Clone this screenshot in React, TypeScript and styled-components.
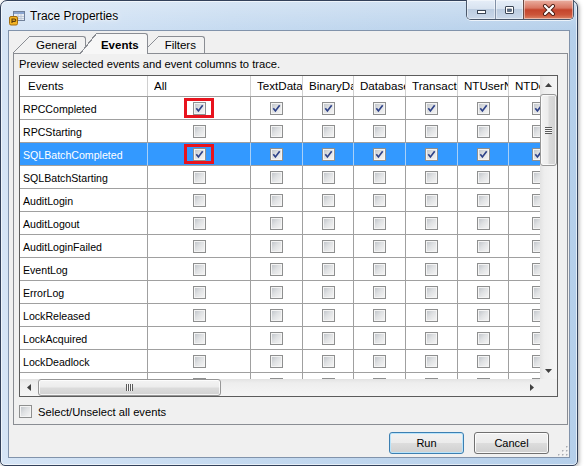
import React from 'react'
import styled, { createGlobalStyle, css } from 'styled-components'

const UI_FONT = '"Liberation Sans", Arial, sans-serif'

const GlobalStyle = createGlobalStyle`
  * { box-sizing: border-box; }
  html, body { margin: 0; padding: 0; background: #ffffff; }
  body { font-family: ${UI_FONT}; color: #000; }
`

type GridColumn = { title: string; width: number }

const EVENTS = [
  'RPCCompleted',
  'RPCStarting',
  'SQLBatchCompleted',
  'SQLBatchStarting',
  'AuditLogin',
  'AuditLogout',
  'AuditLoginFailed',
  'EventLog',
  'ErrorLog',
  'LockReleased',
  'LockAcquired',
  'LockDeadlock',
  'LockTimeout',
]

const COLUMNS: GridColumn[] = [
  { title: 'All', width: 103 },
  { title: 'TextData', width: 52 },
  { title: 'BinaryData', width: 51 },
  { title: 'DatabaseName', width: 52 },
  { title: 'TransactionID', width: 52 },
  { title: 'NTUserName', width: 51 },
  { title: 'NTDomainName', width: 60 },
]

const CHECKED_ROWS = [0, 2]
const SELECTED_ROW = 2
const NAME_WIDTH = 128

export default function App() {
  return (
    <>
      <GlobalStyle />
      <Window>
        <TitleBar>
          <AppIcon />
          <Title>Trace Properties</Title>
          <CaptionGroup>
            <CaptionButton $kind="min">
              <svg width="11" height="10" viewBox="0 0 11 10">
                <rect x="1.5" y="5.5" width="8" height="3" fill="#fff" stroke="#3b4656" />
              </svg>
            </CaptionButton>
            <CaptionButton $kind="max">
              <svg width="11" height="10" viewBox="0 0 11 10">
                <rect x="1.5" y="1.5" width="8" height="7" rx="0.5" fill="#fff" stroke="#3b4656" />
                <rect x="3.5" y="4" width="4" height="2.5" fill="#5b6f8c" stroke="#3b4656" strokeWidth="0.6" />
              </svg>
            </CaptionButton>
            <CaptionButton $kind="close">
              <svg width="14" height="12" viewBox="0 0 14 12">
                <path d="M3 2 L11 10 M11 2 L3 10" stroke="#4a1d14" strokeWidth="4" strokeLinecap="round" />
                <path d="M3 2 L11 10 M11 2 L3 10" stroke="#fff" strokeWidth="2.2" strokeLinecap="round" />
              </svg>
            </CaptionButton>
          </CaptionGroup>
        </TitleBar>

        <Client>
          <TabStrip>
            <Tab label="General" layer={2} />
            <Tab label="Events" layer={3} active />
            <Tab label="Filters" layer={1} />
          </TabStrip>

          <TabPanel>
            <Hint>Preview selected events and event columns to trace.</Hint>

            <GridFrame>
              <Viewport>
                <HeaderRow>
                  <HeaderCell $width={NAME_WIDTH} $first>
                    <HeaderText>Events</HeaderText>
                  </HeaderCell>
                  {COLUMNS.map((c) => (
                    <HeaderCell key={c.title} $width={c.width}>
                      <HeaderText>{c.title}</HeaderText>
                    </HeaderCell>
                  ))}
                </HeaderRow>
                {EVENTS.map((name, i) => {
                  const selected = i === SELECTED_ROW
                  const checked = CHECKED_ROWS.includes(i)
                  return (
                    <Row key={name} $selected={selected}>
                      <NameCell $selected={selected}>{name}</NameCell>
                      {COLUMNS.map((c, j) => (
                        <CheckCell key={c.title} $width={c.width} $selected={selected}>
                          <CheckSpot $marked={j === 0 && checked}>
                            <CheckBox checked={checked} />
                          </CheckSpot>
                        </CheckCell>
                      ))}
                    </Row>
                  )
                })}
              </Viewport>

              <VScroll>
                <ScrollArrow>
                  <svg width="7" height="4" viewBox="0 0 7 4">
                    <polygon points="0,4 7,4 3.5,0" fill="#404040" />
                  </svg>
                </ScrollArrow>
                <VThumb>
                  <VGrip />
                </VThumb>
                <Track />
                <ScrollArrow>
                  <svg width="7" height="4" viewBox="0 0 7 4">
                    <polygon points="0,0 7,0 3.5,4" fill="#404040" />
                  </svg>
                </ScrollArrow>
              </VScroll>

              <HScroll>
                <ScrollArrow>
                  <svg width="4" height="7" viewBox="0 0 4 7">
                    <polygon points="4,0 4,7 0,3.5" fill="#404040" />
                  </svg>
                </ScrollArrow>
                <HThumb>
                  <HGrip />
                </HThumb>
                <Track />
                <ScrollArrow>
                  <svg width="4" height="7" viewBox="0 0 4 7">
                    <polygon points="0,0 0,7 4,3.5" fill="#404040" />
                  </svg>
                </ScrollArrow>
              </HScroll>

              <Corner />
            </GridFrame>

            <SelectAll>
              <CheckBox />
              <span>Select/Unselect all events</span>
            </SelectAll>
          </TabPanel>

          <ButtonRow>
            <PushButton $default>Run</PushButton>
            <PushButton>Cancel</PushButton>
          </ButtonRow>

          <SizeGrip>
            <svg width="10" height="10" viewBox="0 0 10 10">
              {[
                [8, 0],
                [8, 4],
                [4, 4],
                [8, 8],
                [4, 8],
                [0, 8],
              ].map(([x, y]) => (
                <g key={`${x}-${y}`}>
                  <rect x={x + 1} y={y + 1} width="1.5" height="1.5" fill="#fff" />
                  <rect x={x} y={y} width="1.5" height="1.5" fill="#a9acb2" />
                </g>
              ))}
            </svg>
          </SizeGrip>
        </Client>
      </Window>
    </>
  )
}

function Tab({ label, active, layer }: { label: string; active?: boolean; layer: number }) {
  const fill = active ? '#f7f7f7' : '#f2f2f2'
  return (
    <TabItem $active={active} $layer={layer}>
      <TabSlant $fill={fill} />
      <TabBody $active={active} $fill={fill}>
        {label}
      </TabBody>
    </TabItem>
  )
}

function CheckBox({ checked }: { checked?: boolean }) {
  return (
    <Box>
      {checked && (
        <Tick viewBox="0 0 11 11">
          <path d="M2.3 5.2 L4.4 7.9 L8.7 2.3" fill="none" stroke="#2f4389" strokeWidth="1.7" />
        </Tick>
      )}
    </Box>
  )
}

function AppIcon() {
  return (
    <IconSvg width="16" height="16" viewBox="0 0 16 16">
      <rect x="4.5" y="1.5" width="11" height="9" fill="#e8edf3" stroke="#71819a" />
      <rect x="5" y="2" width="10" height="2" fill="#8aa5cf" />
      <path d="M5 6.5 H15 M5 8.5 H15 M9 4 V10 M12 4 V10" stroke="#b8c3d2" strokeWidth="0.8" />
      <rect x="0.5" y="6.5" width="8" height="8.5" rx="1.5" fill="#f3b526" stroke="#a36d10" />
      <path d="M3 13 V9 H5.5 Q6.8 9 6.8 10.2 Q6.8 11.4 5.5 11.4 H3" fill="none" stroke="#5a3a08" strokeWidth="1.1" />
    </IconSvg>
  )
}

/* window chrome */

const Window = styled.div`
  display: flex;
  flex-direction: column;
  width: 578px;
  height: 466px;
  padding: 0 7px 7px;
  border: 1px solid #33415a;
  border-radius: 7px 7px 5px 5px;
  background: linear-gradient(180deg, rgba(255, 255, 255, 0.3) 0px, rgba(255, 255, 255, 0) 30px),
    linear-gradient(90deg, #d6e5f6 0%, #c5daf0 40%, #b5cfea 100%);
  box-shadow: inset 0 0 0 1px rgba(255, 255, 255, 0.6), 1px 1px 4px rgba(0, 0, 0, 0.35);
`

const TitleBar = styled.div`
  display: flex;
  align-items: flex-start;
  height: 29px;
  padding-left: 1px;
`

const IconSvg = styled.svg`
  flex: none;
  margin-top: 9px;
`

const Title = styled.span`
  flex: 1;
  margin: 8px 0 0 5px;
  font-size: 12px;
  line-height: 14px;
  color: #000;
  text-shadow: 0 0 6px rgba(255, 255, 255, 0.95), 0 0 2px #fff;
`

const CaptionGroup = styled.div`
  display: flex;
  height: 20px;
  margin: -1px -4px 0 0;
  border: 1px solid #4b586b;
  border-top: none;
  border-radius: 0 0 5px 5px;
  overflow: hidden;
  box-shadow: 0 1px 0 rgba(255, 255, 255, 0.7);
`

const captionSkins = {
  min: css`
    width: 29px;
    border-right: 1px solid #8190a6;
    background: linear-gradient(180deg, #e6eef8 0%, #d8e3f0 45%, #bccce0 50%, #cbd9ea 100%);
  `,
  max: css`
    width: 28px;
    border-right: 1px solid #6b4b45;
    background: linear-gradient(180deg, #e6eef8 0%, #d8e3f0 45%, #bccce0 50%, #cbd9ea 100%);
  `,
  close: css`
    width: 49px;
    background: linear-gradient(180deg, #eab0a2 0%, #d97763 42%, #c4442c 52%, #cc553a 78%, #dc8466 100%);
  `,
}

const CaptionButton = styled.div<{ $kind: keyof typeof captionSkins }>`
  display: flex;
  align-items: center;
  justify-content: center;
  height: 100%;
  box-shadow: inset 0 0 0 1px rgba(255, 255, 255, 0.45);
  ${(p) => captionSkins[p.$kind]}
`

const Client = styled.div`
  position: relative;
  flex: 1;
  display: flex;
  flex-direction: column;
  padding: 2px 1px 0 4px;
  background: #f0f0f0;
  border: 1px solid #8193ab;
`

/* tabs */

const TabStrip = styled.div`
  position: relative;
  z-index: 1;
  display: flex;
  align-items: flex-end;
  height: 21px;
  margin-bottom: -1px;
`

const TabItem = styled.div<{ $active?: boolean; $layer: number }>`
  position: relative;
  z-index: ${(p) => p.$layer};
  display: flex;
  height: ${(p) => (p.$active ? 21 : 17)}px;
  margin-bottom: ${(p) => (p.$active ? 0 : 1)}px;
  &:not(:first-child) {
    margin-left: -6px;
  }
`

const TabSlant = styled.span<{ $fill: string }>`
  flex: none;
  width: 17px;
  background: linear-gradient(
    to bottom right,
    transparent calc(50% - 0.7px),
    #8a8d93 calc(50% - 0.7px),
    #8a8d93 calc(50% + 0.5px),
    ${(p) => p.$fill} calc(50% + 0.5px)
  );
`

const TabBody = styled.span<{ $active?: boolean; $fill: string }>`
  display: flex;
  align-items: center;
  padding: ${(p) => (p.$active ? '2px 8px 0 4px' : '0 8px 0 6px')};
  border-top: 1px solid #8a8d93;
  border-right: 1px solid #8a8d93;
  border-top-right-radius: 3px;
  background: ${(p) => p.$fill};
  font-size: 11.5px;
  font-weight: ${(p) => (p.$active ? 700 : 400)};
  white-space: nowrap;
`

const TabPanel = styled.div`
  display: flex;
  flex-direction: column;
  height: 372px;
  padding: 3px 8px 6px 5px;
  border: 1px solid #8a8d93;
  background: #f0f0f0;
`

const Hint = styled.div`
  margin-bottom: 4px;
  font-size: 11.2px;
  line-height: 14px;
  white-space: nowrap;
`

/* grid */

const GridFrame = styled.div`
  display: grid;
  grid-template-columns: 520px 17px;
  grid-template-rows: 303px 17px;
  width: 539px;
  height: 322px;
  border: 1px solid #5c5c5c;
  background: #fff;
`

const Viewport = styled.div`
  overflow: hidden;
  background: #fff;
`

const HeaderRow = styled.div`
  display: flex;
  height: 21px;
  border-bottom: 1px solid #a0a0a0;
`

const HeaderCell = styled.div<{ $width: number; $first?: boolean }>`
  flex: none;
  width: ${(p) => p.$width}px;
  padding-left: ${(p) => (p.$first ? 8 : 6)}px;
  border-right: 1px solid #d0d0d0;
  overflow: hidden;
`

const HeaderText = styled.span`
  display: block;
  overflow: hidden;
  white-space: nowrap;
  text-overflow: clip;
  font-size: 11.6px;
  line-height: 20px;
`

const Row = styled.div<{ $selected?: boolean }>`
  display: flex;
  height: 23px;
  background: ${(p) => (p.$selected ? '#3399ff' : '#ffffff')};
  color: ${(p) => (p.$selected ? '#ffffff' : '#000000')};
`

const cellLines = css<{ $selected?: boolean }>`
  border-right: 1px solid ${(p) => (p.$selected ? '#a9d0f7' : '#a0a0a0')};
  border-bottom: 1px solid #a0a0a0;
`

const NameCell = styled.div<{ $selected?: boolean }>`
  flex: none;
  width: ${NAME_WIDTH}px;
  padding: 1px 0 0 3px;
  font-size: 10.6px;
  line-height: 22px;
  white-space: nowrap;
  overflow: hidden;
  ${cellLines}
`

const CheckCell = styled.div<{ $width: number; $selected?: boolean }>`
  flex: none;
  display: flex;
  align-items: center;
  justify-content: center;
  padding-top: 1px;
  width: ${(p) => p.$width}px;
  ${cellLines}
`

const CheckSpot = styled.span<{ $marked?: boolean }>`
  position: relative;
  display: block;
  ${(p) =>
    p.$marked &&
    css`
      &::after {
        content: '';
        position: absolute;
        inset: -4px -8px -3px -9px;
        border: 3px solid #e8131d;
      }
    `}
`

const Box = styled.span`
  position: relative;
  display: block;
  flex: none;
  width: 13px;
  height: 13px;
  border: 1px solid #8e8f8f;
  background: #f4f4f4;
  &::before {
    content: '';
    position: absolute;
    inset: 1px;
    background: linear-gradient(135deg, #c3c7cc 0%, #dfe1e3 45%, #f3f3f3 100%);
  }
`

const Tick = styled.svg`
  position: absolute;
  inset: 0;
  width: 11px;
  height: 11px;
`

/* scroll bars */

const VScroll = styled.div`
  display: flex;
  flex-direction: column;
  background: linear-gradient(90deg, #e3e3e3 0%, #eeeeee 25%, #f5f5f5 100%);
`

const HScroll = styled.div`
  display: flex;
  background: linear-gradient(180deg, #e3e3e3 0%, #eeeeee 25%, #f5f5f5 100%);
`

const ScrollArrow = styled.div`
  flex: none;
  display: flex;
  align-items: center;
  justify-content: center;
  width: 17px;
  height: 17px;
`

const Track = styled.div`
  flex: 1;
`

const thumbSkin = css`
  flex: none;
  display: flex;
  align-items: center;
  justify-content: center;
  border: 1px solid #979797;
  border-radius: 3px;
  box-shadow: inset 0 0 0 1px rgba(255, 255, 255, 0.75);
`

const VThumb = styled.div`
  ${thumbSkin}
  height: 72px;
  margin: 1px 0 0;
  background: linear-gradient(90deg, #f4f4f4 0%, #ececec 48%, #dcdcdc 52%, #d2d2d2 100%);
`

const HThumb = styled.div`
  ${thumbSkin}
  width: 183px;
  margin-left: 1px;
  background: linear-gradient(180deg, #f4f4f4 0%, #ececec 48%, #dcdcdc 52%, #d2d2d2 100%);
`

const VGrip = styled.span`
  width: 7px;
  height: 7px;
  background: repeating-linear-gradient(180deg, #5a5a5a 0 1px, #f8f8f8 1px 2px);
`

const HGrip = styled.span`
  width: 7px;
  height: 7px;
  background: repeating-linear-gradient(90deg, #5a5a5a 0 1px, #f8f8f8 1px 2px);
`

const Corner = styled.div`
  background: #f0f0f0;
`

const SelectAll = styled.label`
  display: flex;
  align-items: center;
  gap: 6px;
  height: 13px;
  margin-top: 8px;
  font-size: 11.2px;
  white-space: nowrap;
`

/* footer */

const ButtonRow = styled.div`
  display: flex;
  justify-content: flex-end;
  gap: 10px;
  padding: 7px 19px 0 0;
`

const PushButton = styled.button<{ $default?: boolean }>`
  width: 75px;
  height: 22px;
  padding: 0;
  font-family: ${UI_FONT};
  font-size: 11px;
  color: #000;
  border: 1px solid ${(p) => (p.$default ? '#3c7fb1' : '#707070')};
  border-radius: 3px;
  background: linear-gradient(180deg, #f2f2f2 0%, #ebebeb 49%, #dddddd 50%, #cfcfcf 100%);
  box-shadow: inset 0 0 0 1px ${(p) => (p.$default ? '#b9e4fb' : 'rgba(255, 255, 255, 0.85)')};
`

const SizeGrip = styled.div`
  position: absolute;
  right: 1px;
  bottom: 1px;
  width: 10px;
  height: 10px;
  line-height: 0;
`
